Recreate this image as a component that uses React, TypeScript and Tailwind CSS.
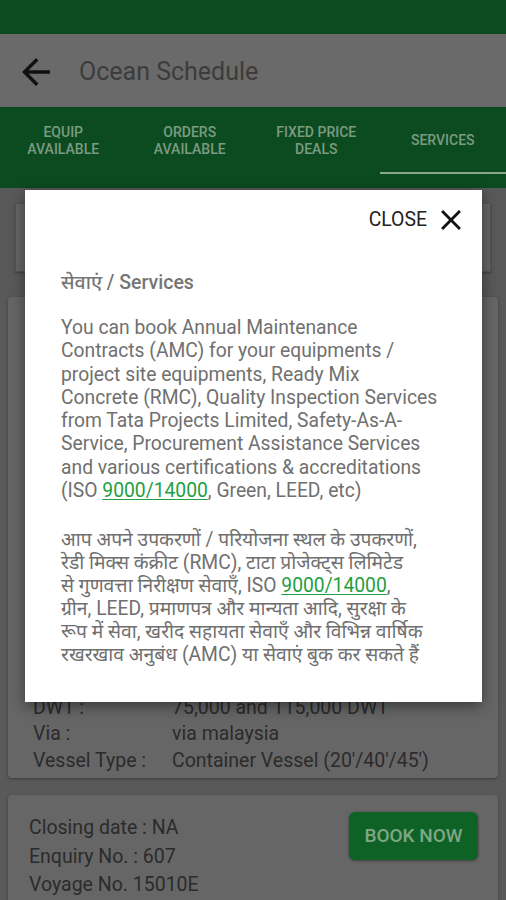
const tabs = [
  ['EQUIP', 'AVAILABLE'],
  ['ORDERS', 'AVAILABLE'],
  ['FIXED PRICE', 'DEALS'],
  ['SERVICES'],
]

const englishLines = [
  'You can book Annual Maintenance',
  'Contracts (AMC) for your equipments /',
  'project site equipments, Ready Mix',
  'Concrete (RMC), Quality Inspection Services',
  'from Tata Projects Limited, Safety-As-A-',
  'Service, Procurement Assistance Services',
  'and various certifications & accreditations',
]

const hindiLines = [
  'ग्रीन, LEED, प्रमाणपत्र और मान्यता आदि, सुरक्षा के',
  'रूप में सेवा, खरीद सहायता सेवाएँ और विभिन्न वार्षिक',
  'रखरखाव अनुबंध (AMC) या सेवाएं बुक कर सकते हैं',
]

function BackArrow() {
  return (
    <svg width="42" height="42" viewBox="0 0 24 24" className="shrink-0 fill-[#111]">
      <path d="M20 11H7.83l5.59-5.59L12 4l-8 8 8 8 1.41-1.41L7.83 13H20v-2z" />
    </svg>
  )
}

function CloseIcon() {
  return (
    <svg width="34" height="34" viewBox="0 0 24 24" className="shrink-0 fill-[#111]">
      <path d="M19 6.41 17.59 5 12 10.59 6.41 5 5 6.41 10.59 12 5 17.59 6.41 19 12 13.41 17.59 19 19 17.59 13.41 12z" />
    </svg>
  )
}

function Link({ children }: { children: React.ReactNode }) {
  return <span className="text-[#1f9e42] underline underline-offset-2">{children}</span>
}

export default function App() {
  return (
    <div
      className="relative w-[506px] h-[900px] overflow-hidden bg-[#595959]"
      style={{ fontFamily: 'Roboto, "Noto Sans", sans-serif' }}
    >
      {/* Status bar */}
      <div className="h-[34px] bg-[#0c4b20]" />

      {/* App bar */}
      <div className="h-[73px] bg-[#6a6a6a] flex items-center pl-[15px] pt-[2px]">
        <BackArrow />
        <span className="ml-[22px] text-[25px] text-[#3c3c3c]">Ocean Schedule</span>
      </div>

      {/* Tabs */}
      <div className="h-[81px] bg-[#0c4b20] grid grid-cols-4">
        {tabs.map((t, i) => (
          <div key={i} className="relative flex flex-col items-center justify-center pb-[14px]">
            {t.map((line) => (
              <span key={line} className="text-[14px] leading-[17px] font-medium text-[#7b9b80]">
                {line}
              </span>
            ))}
            {i === 3 && <div className="absolute left-0 right-0 bottom-[14px] h-[2px] bg-[#88a78d]" />}
          </div>
        ))}
      </div>

      {/* Page content (behind scrim) */}
      <div className="px-[8px] pt-[15px] flex flex-col">
        <div className="mx-[7px] h-[69px] bg-[#666] border border-[#555] shadow-[0_1px_2px_rgba(0,0,0,0.3)]" />

        <div className="mt-[25px] h-[481px] bg-[#666] rounded-[4px] shadow-[0_1px_3px_rgba(0,0,0,0.35)] flex flex-col justify-end pl-[25px] pb-[4px] text-[19.5px] leading-[26.5px] text-[#2b2b2b]">
          {[
            ['DWT :', '75,000 and 115,000 DWT'],
            ['Via :', 'via malaysia'],
            ['Vessel Type :', "Container Vessel (20'/40'/45')"],
          ].map(([k, v]) => (
            <div key={k} className="flex">
              <span className="w-[139px]">{k}</span>
              <span>{v}</span>
            </div>
          ))}
        </div>

        <div className="mt-[17px] h-[120px] bg-[#666] rounded-[4px] shadow-[0_1px_3px_rgba(0,0,0,0.35)] flex justify-between pl-[21px] pr-[20px] pt-[17px]">
          <div className="flex flex-col pt-[2px] text-[19.5px] leading-[28.5px] text-[#2b2b2b]">
            <span>Closing date : NA</span>
            <span>Enquiry No. : 607</span>
            <span>Voyage No. 15010E</span>
          </div>
          <div className="h-[48px] w-[129px] rounded-[6px] bg-[#0f6226] shadow-[0_1px_3px_rgba(0,0,0,0.4)] flex items-center justify-center text-[19px] font-medium text-[#7fa785]">
            BOOK NOW
          </div>
        </div>
      </div>

      {/* Dialog */}
      <div className="absolute left-[25px] top-[190px] w-[457px] h-[512px] bg-white shadow-[0_4px_14px_rgba(0,0,0,0.45)] flex flex-col">
        <div className="h-[60px] flex items-center justify-end pr-[14px]">
          <span className="mr-[7px] text-[19.4px] leading-[24px] text-[#222]">CLOSE</span>
          <CloseIcon />
        </div>
        <div className="pl-[36px] pr-[10px] text-[#707070] whitespace-nowrap">
          <h2 className="mt-[21px] text-[19.5px] leading-[24px] font-medium text-[#757575]">सेवाएं / Services</h2>
          <div className="mt-[21px] text-[19.3px] leading-[23.3px]">
            {englishLines.map((l) => (
              <div key={l}>{l}</div>
            ))}
            <div>
              (ISO <Link>9000/14000</Link>, Green, LEED, etc)
            </div>
          </div>
          <div className="mt-[25.6px] text-[19.3px] leading-[23px]">
            <div>आप अपने उपकरणों / परियोजना स्थल के उपकरणों,</div>
            <div>रेडी मिक्स कंक्रीट (RMC), टाटा प्रोजेक्ट्स लिमिटेड</div>
            <div>
              से गुणवत्ता निरीक्षण सेवाएँ, ISO <Link>9000/14000</Link>,
            </div>
            {hindiLines.map((l) => (
              <div key={l}>{l}</div>
            ))}
          </div>
        </div>
      </div>
    </div>
  )
}
